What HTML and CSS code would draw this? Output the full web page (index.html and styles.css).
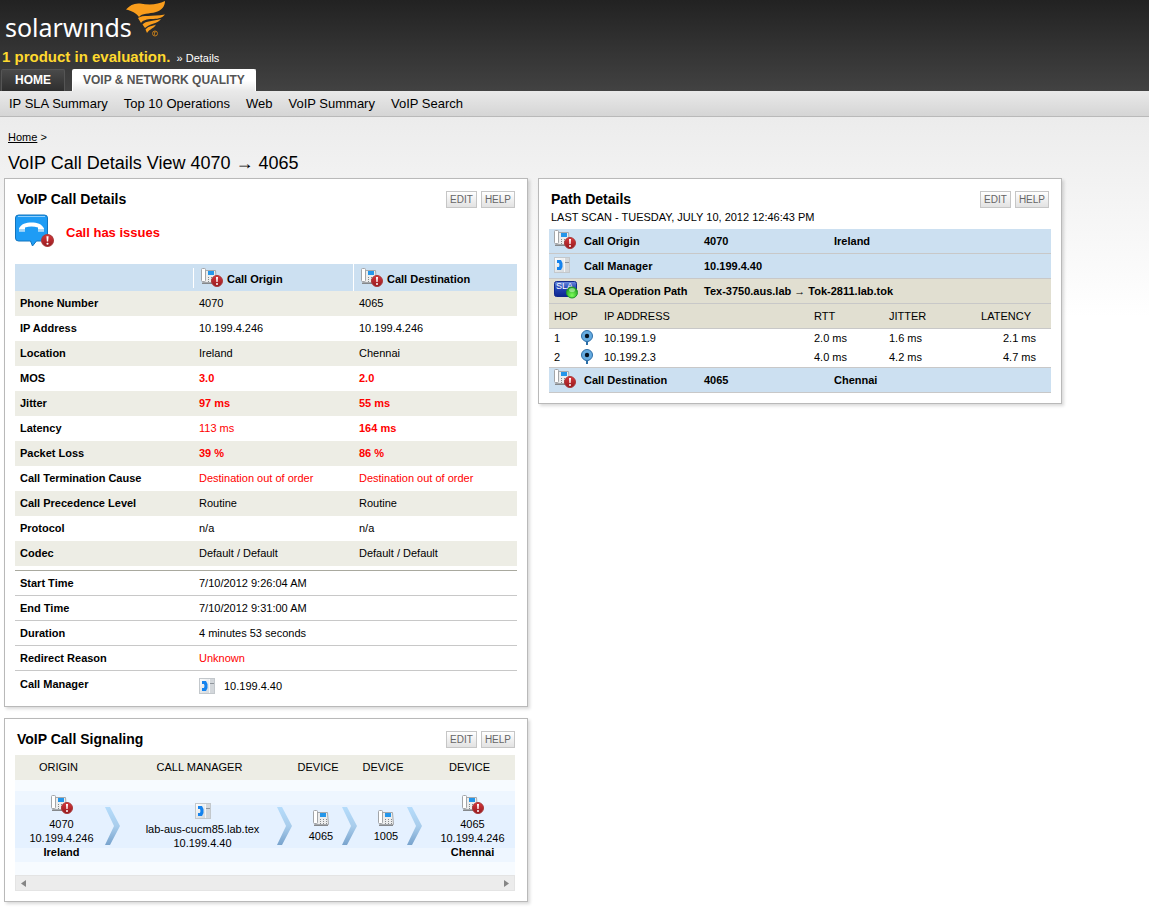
FILE: index.html
```
<!DOCTYPE html>
<html lang="en">
<head>
    <meta charset="UTF-8">
    <meta name="viewport" content="width=device-width, initial-scale=1.0">
    <title>VoIP Call Details View</title>
    <link rel="stylesheet" href="styles.css">
</head>
<body>
    <!-- Shared icons -->
    <svg class="icon-defs" width="0" height="0" aria-hidden="true">
        <defs>
            <linearGradient id="grad-alert" x1="0" y1="0" x2="0" y2="1">
                <stop offset="0" stop-color="#d8383c"/>
                <stop offset="1" stop-color="#94191e"/>
            </linearGradient>
            <linearGradient id="grad-box" x1="0" y1="0" x2="1" y2="1">
                <stop offset="0" stop-color="#ffffff"/>
                <stop offset="1" stop-color="#c9cfd4"/>
            </linearGradient>
            <linearGradient id="grad-chevron" x1="0" y1="0" x2="0" y2="1">
                <stop offset="0" stop-color="#b5dcfb"/>
                <stop offset="0.5" stop-color="#a9cdec"/>
                <stop offset="1" stop-color="#78a3cd"/>
            </linearGradient>
            <linearGradient id="grad-sla" x1="0" y1="0" x2="0" y2="1">
                <stop offset="0" stop-color="#6f8ee0"/>
                <stop offset="0.45" stop-color="#2445b4"/>
                <stop offset="1" stop-color="#0c2590"/>
            </linearGradient>
            <radialGradient id="grad-up" cx="0.5" cy="0.75" r="0.7">
                <stop offset="0" stop-color="#7dff5a"/>
                <stop offset="1" stop-color="#1d9a1d"/>
            </radialGradient>
        </defs>
        <symbol id="phone" viewBox="0 0 16 16">
            <path d="M4.500 2.500h10l1 12h-14v-2z" fill="#eceded" stroke="#a6a9ac"/>
            <rect x="0.500" y="0.500" width="4" height="13" rx="1" fill="#fff" stroke="#a2a5a8"/>
            <rect x="7" y="3" width="6" height="4" fill="#2496ea"/>
            <path d="M7 9.500h1M10 9.500h1M13 9.500h1M7 11.500h1M10 11.500h1M13 11.500h1M7 13.500h1M10 13.500h1M13 13.500h1" stroke="#85888b"/>
            <path d="M1 15.500h14" stroke="#85888b"/>
        </symbol>
        <symbol id="alert" viewBox="0 0 12 12">
            <circle cx="6" cy="6" r="5.500" fill="url(#grad-alert)" stroke="#a83a3a"/>
            <path d="M5 2h2l-.4 5H5.400z" fill="#fff"/>
            <circle cx="6" cy="9" r="1" fill="#fff"/>
        </symbol>
        <symbol id="phone-alert" viewBox="0 0 22 19">
            <use href="#phone" width="16" height="16"/>
            <use href="#alert" x="10" y="7" width="12" height="12"/>
        </symbol>
        <symbol id="manager" viewBox="0 0 16 16">
            <rect x="0.500" y="0.500" width="15" height="15" fill="url(#grad-box)" stroke="#c3c8cc"/>
            <rect x="11" y="1" width="4" height="14" fill="#d3d7db"/>
            <path d="M10.500 1v14" stroke="#f4f6f8"/>
            <path d="M11 5.500h4" stroke="#8f959b"/>
            <path d="M3 3h4l1.500 3v4L7 13H3v-3h2l.5-2L5 6H3z" fill="#1583ee"/>
        </symbol>
        <symbol id="pin" viewBox="0 0 12 15">
            <path d="M5 11h2v4H5z" fill="#2c6ea5"/>
            <path d="M1.500 8.500L6 13l4.500-4.500z" fill="#2f6fa8"/>
            <circle cx="6" cy="6" r="5.500" fill="#65abe0" stroke="#2f6fa8"/>
            <circle cx="6" cy="6" r="2.200" fill="#061322"/>
        </symbol>
        <symbol id="chevron" viewBox="0 0 15 38">
            <path d="M0 0h5l10 19L5 38H0l9-19z" fill="url(#grad-chevron)"/>
        </symbol>
    </svg>

    <header class="page-header">
        <a class="logo" href="#">
            <span class="logo-text">solarw&#305;nds</span>
            <svg class="logo-flame" viewBox="0 0 40 37" width="40" height="37" aria-hidden="true">
                <path d="M0 9.500C4 5 8 3 14 3.500 24 5.500 32 4.500 39 1c0 5-3 9-9 11-7 2-14 1-17 5C10 13 6 11 0 9.500z" fill="#f99d1c"/>
                <path d="M12 18c5-3.500 13-1 27-3.500-3 4-9 4.500-13 4.500-5 0-9 1-11 4z" fill="#f99d1c"/>
                <path d="M16.500 24.500C20 20.500 27 21.500 35 19c-3 5-11 4-16 9z" fill="#f99d1c"/>
                <path d="M19.500 29.500C23 25.500 26 26.500 30 24.500c-2 4-6 4-9 8.500z" fill="#f99d1c"/>
                <circle cx="29" cy="33.500" r="2.500" fill="none" stroke="#c07c1c"/>
                <path d="M28.500 35v-3h1.500" fill="none" stroke="#c07c1c" stroke-width="0.800"/>
            </svg>
        </a>
        <p class="evaluation">1 product in evaluation. <a href="#">» Details</a></p>
        <nav class="tabs">
            <a class="tab" href="#">HOME</a>
            <a class="tab tab-active" href="#">VOIP &amp; NETWORK QUALITY</a>
        </nav>
    </header>

    <nav class="sub-nav">
        <a href="#">IP SLA Summary</a>
        <a href="#">Top 10 Operations</a>
        <a href="#">Web</a>
        <a href="#">VoIP Summary</a>
        <a href="#">VoIP Search</a>
    </nav>

    <main class="content">
        <p class="breadcrumb"><a href="#">Home</a> &gt;</p>
        <h1>VoIP Call Details View 4070 → 4065</h1>

        <div class="columns">
            <div class="column">
                <section class="panel">
                    <div class="panel-header">
                        <h2>VoIP Call Details</h2>
                        <div class="panel-actions">
                            <button type="button">EDIT</button>
                            <button type="button">HELP</button>
                        </div>
                    </div>
                    <div class="call-status">
                        <svg width="39" height="34" viewBox="0 0 39 34" aria-hidden="true">
                            <path d="M3 .5h26q3 0 3 3v20q0 3-3 3h-8l-4 5-2-5H3q-3 0-3-3v-20q0-3 3-3z" transform="translate(.5 .5)" fill="#1e9cf5" stroke="#1274bd"/>
                            <path d="M3 2.500h27" stroke="#8fd0ff"/>
                            <path d="M4 17.500v-3C6 10 11 8.500 16.500 8.500S27 10 29 14.500v3h-6v-4q-6.500-2-13 0v4z" fill="#fff"/>
                            <path d="M4 16h6M23 16h6" stroke="#55aeea"/>
                            <use href="#alert" x="26" y="20" width="13" height="13"/>
                        </svg>
                        <span>Call has issues</span>
                    </div>

                    <table class="details call-quality">
                        <colgroup>
                            <col class="col-label">
                            <col class="col-origin">
                            <col>
                        </colgroup>
                        <thead>
                            <tr>
                                <td></td>
                                <th class="head-origin"><span><svg width="22" height="19"><use href="#phone-alert"/></svg>Call Origin</span></th>
                                <th class="head-destination"><span><svg width="22" height="19"><use href="#phone-alert"/></svg>Call Destination</span></th>
                            </tr>
                        </thead>
                        <tbody>
                            <tr><th>Phone Number</th><td>4070</td><td>4065</td></tr>
                            <tr><th>IP Address</th><td>10.199.4.246</td><td>10.199.4.246</td></tr>
                            <tr><th>Location</th><td>Ireland</td><td>Chennai</td></tr>
                            <tr><th>MOS</th><td class="critical">3.0</td><td class="critical">2.0</td></tr>
                            <tr><th>Jitter</th><td class="critical">97 ms</td><td class="critical">55 ms</td></tr>
                            <tr><th>Latency</th><td class="warning">113 ms</td><td class="critical">164 ms</td></tr>
                            <tr><th>Packet Loss</th><td class="critical">39 %</td><td class="critical">86 %</td></tr>
                            <tr><th>Call Termination Cause</th><td class="warning">Destination out of order</td><td class="warning">Destination out of order</td></tr>
                            <tr><th>Call Precedence Level</th><td>Routine</td><td>Routine</td></tr>
                            <tr><th>Protocol</th><td>n/a</td><td>n/a</td></tr>
                            <tr><th>Codec</th><td>Default / Default</td><td>Default / Default</td></tr>
                        </tbody>
                    </table>

                    <table class="details call-times">
                        <colgroup>
                            <col class="col-label">
                            <col>
                        </colgroup>
                        <tbody>
                            <tr><th>Start Time</th><td>7/10/2012 9:26:04 AM</td></tr>
                            <tr><th>End Time</th><td>7/10/2012 9:31:00 AM</td></tr>
                            <tr><th>Duration</th><td>4 minutes 53 seconds</td></tr>
                            <tr><th>Redirect Reason</th><td class="warning">Unknown</td></tr>
                            <tr><th>Call Manager</th><td><span class="manager-value"><svg width="16" height="16"><use href="#manager"/></svg>10.199.4.40</span></td></tr>
                        </tbody>
                    </table>
                </section>

                <section class="panel">
                    <div class="panel-header">
                        <h2>VoIP Call Signaling</h2>
                        <div class="panel-actions">
                            <button type="button">EDIT</button>
                            <button type="button">HELP</button>
                        </div>
                    </div>
                    <div class="signaling-wrap">
                        <table class="signaling">
                            <colgroup>
                                <col class="sig-origin">
                                <col class="sig-arrow">
                                <col class="sig-manager">
                                <col class="sig-arrow">
                                <col class="sig-device">
                                <col class="sig-arrow">
                                <col class="sig-device">
                                <col class="sig-arrow">
                                <col class="sig-last">
                            </colgroup>
                            <thead>
                                <tr>
                                    <th>ORIGIN</th><td></td>
                                    <th>CALL MANAGER</th><td></td>
                                    <th>DEVICE</th><td></td>
                                    <th>DEVICE</th><td></td>
                                    <th>DEVICE</th>
                                </tr>
                            </thead>
                            <tbody>
                                <tr>
                                    <td class="node"><svg width="22" height="19"><use href="#phone-alert"/></svg>4070<br>10.199.4.246<br><b>Ireland</b></td>
                                    <td><svg class="chevron" width="15" height="38"><use href="#chevron"/></svg></td>
                                    <td class="node"><svg width="16" height="16"><use href="#manager"/></svg>lab-aus-cucm85.lab.tex<br>10.199.4.40</td>
                                    <td><svg class="chevron" width="15" height="38"><use href="#chevron"/></svg></td>
                                    <td class="node"><svg width="16" height="16"><use href="#phone"/></svg>4065</td>
                                    <td><svg class="chevron" width="15" height="38"><use href="#chevron"/></svg></td>
                                    <td class="node"><svg width="16" height="16"><use href="#phone"/></svg>1005</td>
                                    <td><svg class="chevron" width="15" height="38"><use href="#chevron"/></svg></td>
                                    <td class="node"><svg width="22" height="19"><use href="#phone-alert"/></svg>4065<br>10.199.4.246<br><b>Chennai</b></td>
                                </tr>
                            </tbody>
                        </table>
                        <div class="scroll-track">
                            <button type="button" aria-label="Scroll left"><svg width="5" height="7"><path d="M5 0v7L0 3.500z" fill="#858585"/></svg></button>
                            <button type="button" aria-label="Scroll right"><svg width="5" height="7"><path d="M0 0v7l5-3.500z" fill="#858585"/></svg></button>
                        </div>
                    </div>
                </section>
            </div>

            <div class="column">
                <section class="panel">
                    <div class="panel-header">
                        <h2>Path Details</h2>
                        <div class="panel-actions">
                            <button type="button">EDIT</button>
                            <button type="button">HELP</button>
                        </div>
                    </div>
                    <p class="last-scan">LAST SCAN - TUESDAY, JULY 10, 2012 12:46:43 PM</p>

                    <table class="path">
                        <colgroup>
                            <col class="path-icon">
                            <col class="path-name">
                            <col class="path-value">
                            <col>
                        </colgroup>
                        <tbody>
                            <tr><td><svg width="22" height="19"><use href="#phone-alert"/></svg></td><th>Call Origin</th><td>4070</td><td>Ireland</td></tr>
                            <tr><td><svg width="16" height="16"><use href="#manager"/></svg></td><th>Call Manager</th><td>10.199.4.40</td><td></td></tr>
                            <tr class="path-sla">
                                <td>
                                    <svg width="24" height="18" viewBox="0 0 24 18">
                                        <rect x="0.500" y="0.500" width="22" height="15" rx="2" fill="url(#grad-sla)" stroke="#11288c"/>
                                        <text class="sla-text" x="2" y="8">SLA</text>
                                        <circle cx="18" cy="11.500" r="5.500" fill="url(#grad-up)" stroke="#239a2a"/>
                                        <ellipse cx="18" cy="9" rx="3" ry="2" fill="#c8f7bd" opacity="0.600"/>
                                    </svg>
                                </td>
                                <th>SLA Operation Path</th><td colspan="2">Tex-3750.aus.lab → Tok-2811.lab.tok</td>
                            </tr>
                        </tbody>
                    </table>
                    <table class="hops">
                        <colgroup>
                            <col class="hop-number">
                            <col class="hop-pin">
                            <col class="hop-address">
                            <col class="hop-metric">
                            <col class="hop-metric">
                            <col>
                        </colgroup>
                        <thead>
                            <tr><th>HOP</th><td></td><th>IP ADDRESS</th><th>RTT</th><th>JITTER</th><th>LATENCY</th></tr>
                        </thead>
                        <tbody>
                            <tr><td>1</td><td><svg width="12" height="15"><use href="#pin"/></svg></td><td>10.199.1.9</td><td>2.0 ms</td><td>1.6 ms</td><td>2.1 ms</td></tr>
                            <tr><td>2</td><td><svg width="12" height="15"><use href="#pin"/></svg></td><td>10.199.2.3</td><td>4.0 ms</td><td>4.2 ms</td><td>4.7 ms</td></tr>
                        </tbody>
                    </table>
                    <table class="path path-end">
                        <colgroup>
                            <col class="path-icon">
                            <col class="path-name">
                            <col class="path-value">
                            <col>
                        </colgroup>
                        <tbody>
                            <tr><td><svg width="22" height="19"><use href="#phone-alert"/></svg></td><th>Call Destination</th><td>4065</td><td>Chennai</td></tr>
                        </tbody>
                    </table>
                </section>
            </div>
        </div>
    </main>
</body>
</html>
```

FILE: styles.css
```
* {
    margin: 0;
    padding: 0;
    box-sizing: border-box;
}

body {
    background: #fff;
    color: #000;
    font-family: "Liberation Sans", Arial, sans-serif;
    font-size: 11px;
    line-height: 14px;
}

a {
    color: inherit;
    text-decoration: none;
}

svg {
    display: block;
}

table {
    width: 100%;
    border-collapse: separate;
    border-spacing: 0;
    table-layout: fixed;
}

th {
    text-align: left;
}

.icon-defs {
    position: absolute;
}

/* Header */
.page-header {
    background: linear-gradient(#222, #424242);
    color: #fff;
}

.logo {
    display: flex;
    height: 46px;
    padding-left: 5px;
}

.logo-text {
    padding-top: 9px;
    font-family: "Noto Sans", sans-serif;
    font-size: 25px;
    line-height: 36px;
}

.logo-flame {
    margin-left: -6px;
}

.evaluation {
    height: 23px;
    padding-left: 2px;
    color: #ffd92e;
    font-size: 15px;
    font-weight: bold;
    line-height: 22px;
}

.evaluation a {
    margin-left: 2px;
    color: #fff;
    font-size: 11px;
    font-weight: normal;
}

.tabs {
    display: flex;
    gap: 7px;
    padding-left: 1px;
}

.tab {
    height: 22px;
    padding: 0 13px;
    border: 1px solid #555;
    border-bottom: none;
    border-radius: 2px 2px 0 0;
    background: linear-gradient(#4a4a4a, #2e2e2e);
    font-size: 12px;
    font-weight: bold;
    line-height: 20px;
}

.tab-active {
    padding: 0 10px;
    border-color: #fff;
    background: linear-gradient(#fff 50%, #e9e9e9);
    color: #555;
}

.sub-nav {
    display: flex;
    gap: 16px;
    padding-left: 9px;
    border-bottom: 1px solid #b9b9b9;
    background: linear-gradient(#e9e9e9, #d5d5d5);
    font-size: 13px;
    line-height: 25px;
}

/* Page */
.content {
    padding: 13px 4px 10px;
    background: linear-gradient(#ececec, #fff 200px);
}

.breadcrumb {
    padding-left: 4px;
}

.breadcrumb a {
    text-decoration: underline;
}

h1 {
    padding: 8px 4px 4px;
    font-size: 18px;
    font-weight: normal;
    line-height: 22px;
}

.columns {
    display: grid;
    grid-template-columns: 1fr 1fr;
    gap: 10px;
    align-items: start;
    max-width: 1058px;
}

.column {
    display: grid;
    gap: 11px;
}

/* Panels */
.panel {
    padding: 10px;
    border: 1px solid #b9b9b9;
    background: #fff;
    box-shadow: 2px 2px 3px rgba(0, 0, 0, 0.15);
}

.panel-header {
    display: flex;
    align-items: center;
    justify-content: space-between;
    height: 21px;
    padding: 0 2px;
}

h2 {
    padding-bottom: 2px;
    font-size: 14px;
    line-height: 18px;
}

.panel-actions {
    display: flex;
    gap: 4px;
}

.panel-actions button {
    height: 17px;
    padding: 0 3px;
    border: 1px solid #c6c6c6;
    background: linear-gradient(#fff, #e2e2e2);
    color: #666;
    font: 10px/15px "Liberation Sans", Arial, sans-serif;
}

.call-status {
    display: flex;
    gap: 12px;
    height: 54px;
    padding-top: 4px;
    color: #f00;
    font-size: 13px;
    font-weight: bold;
    line-height: 37px;
}

/* Call details */
.col-label {
    width: 178px;
}

.col-origin {
    width: 160px;
}

.details th {
    height: 25px;
    padding-left: 5px;
}

.details td {
    padding-left: 6px;
}

.call-quality tbody th,
.call-quality tbody td {
    padding-bottom: 2px;
}

.details thead th {
    height: 27px;
    padding-left: 7px;
}

.details thead td,
.details thead th {
    background: #cce0f1;
}

.details thead span {
    display: flex;
    gap: 4px;
    height: 20px;
    padding-left: 1px;
    line-height: 22px;
}

.details .head-origin {
    padding-left: 0;
}

.head-origin span {
    border-left: 1px solid #fff;
}

.details .head-origin span {
    padding-left: 7px;
}

.details .head-destination {
    padding-left: 6px;
    border-left: 1px solid #fff;
}

.details tbody tr:nth-child(odd) {
    background: #edede5;
}

.details .critical {
    color: #f00;
    font-weight: bold;
}

.details .warning {
    color: #f00;
}

.call-times {
    margin-top: 4px;
    border-top: 1px solid #a9a99f;
}

.call-times tbody tr:nth-child(odd) {
    background: none;
}

.call-times tr:not(:last-child) > * {
    border-bottom: 1px solid #c8c8c8;
}

.manager-value {
    display: flex;
    align-items: center;
    gap: 9px;
    padding-top: 4px;
}

/* Signaling */
.signaling-wrap {
    padding-top: 5px;
    padding-right: 2px;
}

.sig-origin {
    width: 90px;
}

.sig-arrow {
    width: 20px;
}

.sig-manager {
    width: 152px;
}

.sig-device {
    width: 45px;
}

.sig-last {
    width: 88px;
}

.signaling thead {
    background: #edede5;
}

.signaling th {
    height: 25px;
    padding: 0 3px 2px 0;
    font-weight: normal;
    text-align: center;
    white-space: nowrap;
}

.signaling tbody {
    background: linear-gradient(#f7fbff 11px, #eef6ff 11px 25px, #e5f1ff 25px 68px, #eef6ff 68px 82px, #f7fbff 82px);
}

.signaling tbody td {
    height: 95px;
    padding-bottom: 4px;
}

.signaling .node {
    padding-bottom: 2px;
    padding-left: 3px;
    text-align: center;
}

.node svg {
    margin: 0 auto 3px;
}

.scroll-track {
    display: flex;
    align-items: center;
    justify-content: space-between;
    height: 16px;
    padding: 0 5px;
    border: 1px solid #e4e4e4;
    background: #ececec;
}

.scroll-track button {
    border: none;
    background: none;
}

/* Path details */
.last-scan {
    height: 19px;
    padding-left: 2px;
}

.path-icon {
    width: 35px;
}

.path-name {
    width: 120px;
}

.path-value {
    width: 130px;
}

.path tr {
    background: #cce0f1;
    font-weight: bold;
}

.path .path-sla {
    background: #e1dfd1;
}

.path th,
.path td {
    height: 25px;
    border-bottom: 1px solid #c8c8c8;
}

.path td:first-child {
    padding-left: 5px;
    padding-bottom: 3px;
}

.sla-text {
    fill: #fff;
    font-size: 9px;
    font-weight: normal;
}

.hop-number {
    width: 32px;
}

.hop-pin {
    width: 23px;
}

.hop-address {
    width: 210px;
}

.hop-metric {
    width: 75px;
}

.hops th {
    font-weight: normal;
}

.hops thead {
    background: #e1dfd1;
}

.hops thead > tr > * {
    height: 25px;
    border-bottom: 1px solid #c8c8c8;
}

.hops th:first-child,
.hops td:first-child {
    padding-left: 5px;
}

.hops tbody td {
    height: 19px;
    padding-bottom: 2px;
}

.hops td:last-child {
    padding-right: 15px;
    text-align: right;
}

.hops th:last-child {
    padding-right: 20px;
    text-align: right;
}

.path-end {
    border-top: 1px solid #c8c8c8;
}
```
